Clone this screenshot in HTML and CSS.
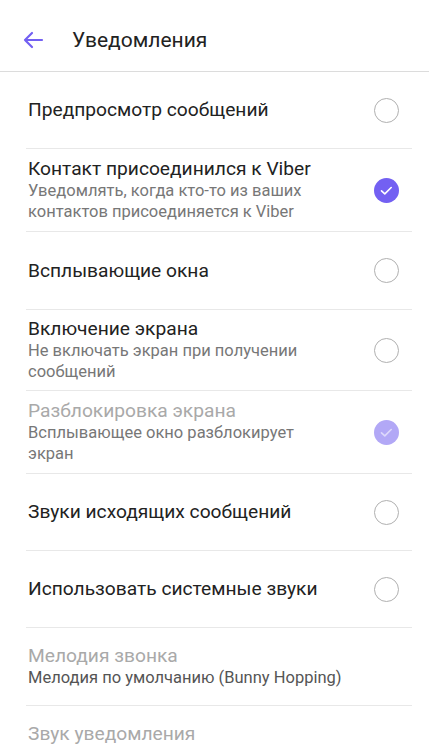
FILE: index.html
```html
<!DOCTYPE html>
<html lang="ru">
<head>
<meta charset="utf-8">
<link rel="stylesheet" href="styles.css">
</head>
<body>
<header class="bar">
  <svg class="back" width="24" height="24" viewBox="0 0 24 24"><path d="M21 12H4M11 5l-7 7 7 7" fill="none" stroke="#7360f2" stroke-width="2.2" stroke-linecap="round" stroke-linejoin="round"/></svg>
  <h1 class="title">Уведомления</h1>
</header>
<ul class="list">
  <li class="row single">
    <div class="text"><div class="t">Предпросмотр сообщений</div></div>
    <span class="radio"></span>
  </li>
  <li class="row tall">
    <div class="text"><div class="t">Контакт присоединился к Viber</div><div class="s">Уведомлять, когда кто-то из ваших контактов присоединяется к Viber</div></div>
    <svg class="check" width="25" height="25" viewBox="0 0 25 25"><circle cx="12.5" cy="12.5" r="12.5" fill="#7360f2"/><path d="M7.5 12.8l3.3 3.1 6.4-6.4" fill="none" stroke="#fff" stroke-width="1.6" stroke-linecap="round" stroke-linejoin="round"/></svg>
  </li>
  <li class="row single s2">
    <div class="text"><div class="t">Всплывающие окна</div></div>
    <span class="radio"></span>
  </li>
  <li class="row tall t2">
    <div class="text"><div class="t">Включение экрана</div><div class="s">Не включать экран при получении сообщений</div></div>
    <span class="radio"></span>
  </li>
  <li class="row tall">
    <div class="text"><div class="t dis">Разблокировка экрана</div><div class="s">Всплывающее окно разблокирует экран</div></div>
    <svg class="check" width="25" height="25" viewBox="0 0 25 25"><circle cx="12.5" cy="12.5" r="12.5" fill="#b2a8f6"/><path d="M7.5 12.8l3.3 3.1 6.4-6.4" fill="none" stroke="#ddd8fb" stroke-width="1.6" stroke-linecap="round" stroke-linejoin="round"/></svg>
  </li>
  <li class="row single">
    <div class="text"><div class="t">Звуки исходящих сообщений</div></div>
    <span class="radio"></span>
  </li>
  <li class="row single">
    <div class="text"><div class="t">Использовать системные звуки</div></div>
    <span class="radio"></span>
  </li>
  <li class="row mid">
    <div class="text"><div class="t dis">Мелодия звонка</div><div class="s dark">Мелодия по умолчанию (Bunny Hopping)</div></div>
  </li>
  <li class="row last">
    <div class="text"><div class="t dis">Звук уведомления</div></div>
  </li>
</ul>
</body>
</html>
```
FILE: styles.css
```css
html, body {
  margin: 0;
  padding: 0;
  background: #fff;
  height: 744px;
  overflow: hidden;
  font-family: Roboto, "Noto Sans", sans-serif;
}
.bar {
  display: flex;
  align-items: center;
  height: 62px;
  padding-top: 9px;
  border-bottom: 1px solid #dcdcdc;
  box-sizing: content-box;
}
.back {
  margin-left: 21px;
  margin-right: 27px;
}
.title {
  margin: 0;
  font-size: 21px;
  font-weight: 400;
  color: #222;
}
.list {
  list-style: none;
  margin: 0 17px 0 26px;
  padding: 0;
}
.row {
  display: flex;
  align-items: center;
  border-bottom: 1px solid #e8e8e8;
  padding-left: 2px;
  box-sizing: border-box;
}
.row.single { height: 77px; }
.row.s2 { height: 78px; }
.row.tall { height: 83px; }
.row.t2 { height: 81px; }
.row.mid { height: 78px; }
.row.last {
  border-bottom: none;
  align-items: flex-start;
  padding-top: 17px;
}
.text {
  flex: 1;
  min-width: 0;
  padding-right: 40px;
}
.t {
  font-size: 19.2px;
  line-height: 22px;
  color: #222;
}
.t.dis { color: #a9a9a9; }
.s {
  font-size: 16.5px;
  line-height: 21px;
  color: #777;
}
.s.dark { color: #555; }
.radio {
  flex: none;
  width: 23px;
  height: 23px;
  border: 1.3px solid #b0b0b0;
  border-radius: 50%;
  margin-right: 13px;
}
.check {
  flex: none;
  margin-right: 13px;
}
```
